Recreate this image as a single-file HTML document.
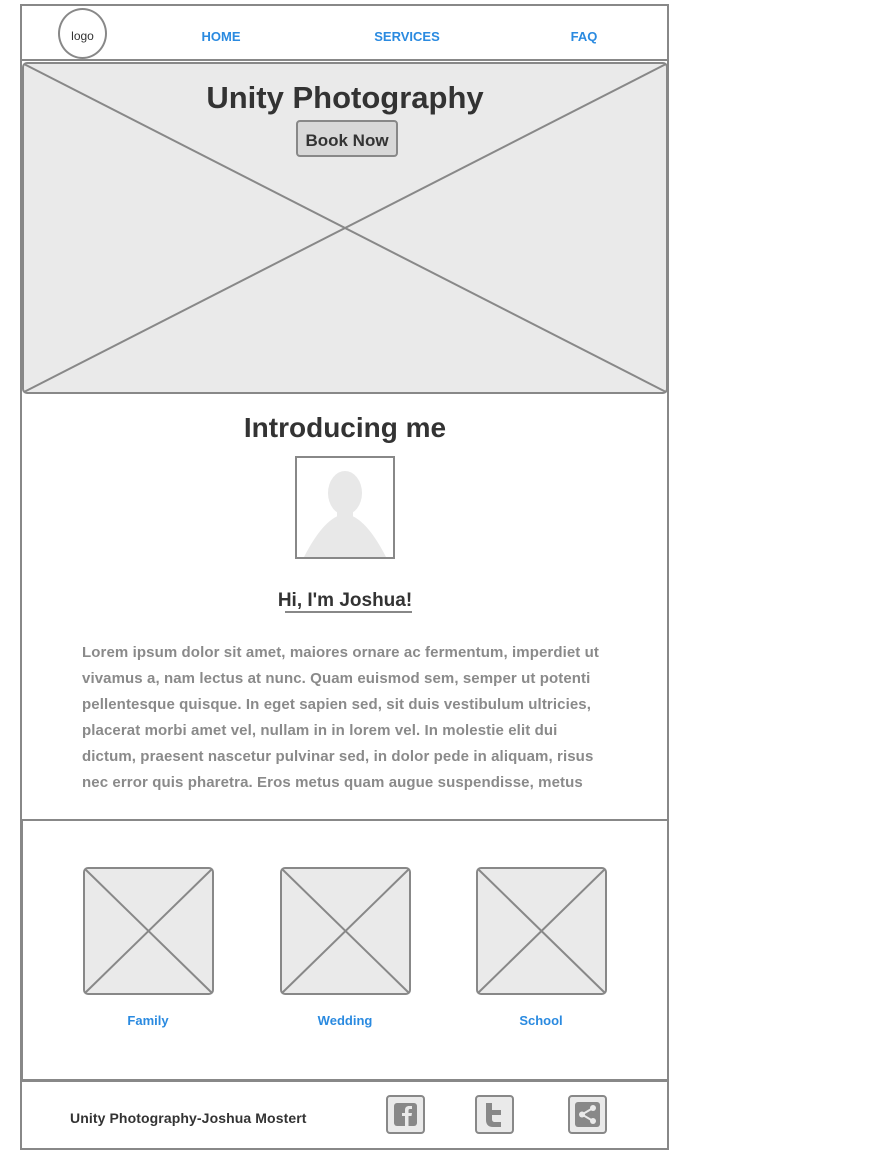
<!DOCTYPE html>
<html><head><meta charset="utf-8"><style>
*{margin:0;padding:0;box-sizing:border-box}
body{width:894px;height:1170px;background:#fff;font-family:"Liberation Sans",sans-serif;position:relative;overflow:hidden}
.a{position:absolute}
.c{position:absolute;transform:translateX(-50%);white-space:nowrap}
.nav{color:#2a8ae0;font-size:13px;font-weight:bold;top:29px}
.lbl{color:#2a8ae0;font-size:13px;font-weight:bold;top:1013px}
.p{left:82px;font-size:15px;font-weight:bold;color:#8a8a8a;white-space:nowrap;letter-spacing:0.1px}
.ic{width:39px;height:39px;border:2px solid #888;border-radius:4px;background:#eaeaea;top:1095px}
</style></head><body>
<div class="a" style="left:20px;top:4px;width:649px;height:1146px;border:2px solid #888"></div>
<div class="a" style="left:20px;top:59px;width:649px;height:2px;background:#888"></div>
<div class="a" style="left:58px;top:8px;width:49px;height:51px;border:2px solid #888;border-radius:50%;font-size:12px;color:#333;text-align:center;line-height:53px">logo</div>
<div class="c nav" style="left:221px">HOME</div>
<div class="c nav" style="left:407px">SERVICES</div>
<div class="c nav" style="left:584px">FAQ</div>
<svg class="a" style="left:22px;top:62px" width="646" height="332"><rect x="1" y="1" width="644" height="330" rx="4" fill="#eaeaea" stroke="#888" stroke-width="2"/><line x1="2" y1="2" x2="644" y2="330" stroke="#888" stroke-width="2"/><line x1="644" y1="2" x2="2" y2="330" stroke="#888" stroke-width="2"/></svg>
<div class="c" style="left:345px;top:80px;font-size:31px;font-weight:bold;color:#333">Unity Photography</div>
<div class="a" style="left:296px;top:120px;width:102px;height:37px;background:#d8d8d8;border:2px solid #888;border-radius:4px;font-size:17px;font-weight:bold;color:#333;text-align:center;line-height:38px">Book Now</div>
<div class="c" style="left:345px;top:412px;font-size:28px;font-weight:bold;color:#333">Introducing me</div>
<svg class="a" style="left:295px;top:456px" width="100" height="103"><rect x="1" y="1" width="98" height="101" fill="#fff" stroke="#888" stroke-width="2"/><ellipse cx="50" cy="37" rx="17" ry="22" fill="#e8e8e8"/><rect x="42" y="50" width="16" height="20" fill="#e8e8e8"/><path d="M9 101 Q30 60 50 58 Q70 60 91 101 Z" fill="#e8e8e8"/></svg>
<div class="c" style="left:345px;top:590px;font-size:19px;font-weight:bold;color:#333">Hi, I'm Joshua!</div>
<div class="a" style="left:285px;top:611px;width:127px;height:2px;background:#888"></div>
<div class="a p" style="top:644px">Lorem ipsum dolor sit amet, maiores ornare ac fermentum, imperdiet ut</div>
<div class="a p" style="top:670px">vivamus a, nam lectus at nunc. Quam euismod sem, semper ut potenti</div>
<div class="a p" style="top:696px">pellentesque quisque. In eget sapien sed, sit duis vestibulum ultricies,</div>
<div class="a p" style="top:722px">placerat morbi amet vel, nullam in in lorem vel. In molestie elit dui</div>
<div class="a p" style="top:748px">dictum, praesent nascetur pulvinar sed, in dolor pede in aliquam, risus</div>
<div class="a p" style="top:774px">nec error quis pharetra. Eros metus quam augue suspendisse, metus</div>
<div class="a" style="left:20px;top:819px;width:649px;height:2px;background:#888"></div>
<div class="a" style="left:20px;top:821px;width:3px;height:260px;background:#888"></div>
<svg class="a" style="left:83px;top:867px" width="131" height="128"><rect x="1" y="1" width="129" height="126" rx="4" fill="#eaeaea" stroke="#888" stroke-width="2"/><line x1="2" y1="2" x2="129" y2="126" stroke="#888" stroke-width="2"/><line x1="129" y1="2" x2="2" y2="126" stroke="#888" stroke-width="2"/></svg>
<svg class="a" style="left:280px;top:867px" width="131" height="128"><rect x="1" y="1" width="129" height="126" rx="4" fill="#eaeaea" stroke="#888" stroke-width="2"/><line x1="2" y1="2" x2="129" y2="126" stroke="#888" stroke-width="2"/><line x1="129" y1="2" x2="2" y2="126" stroke="#888" stroke-width="2"/></svg>
<svg class="a" style="left:476px;top:867px" width="131" height="128"><rect x="1" y="1" width="129" height="126" rx="4" fill="#eaeaea" stroke="#888" stroke-width="2"/><line x1="2" y1="2" x2="129" y2="126" stroke="#888" stroke-width="2"/><line x1="129" y1="2" x2="2" y2="126" stroke="#888" stroke-width="2"/></svg>
<div class="c lbl" style="left:148px">Family</div>
<div class="c lbl" style="left:345px">Wedding</div>
<div class="c lbl" style="left:541px">School</div>
<div class="a" style="left:20px;top:1079px;width:649px;height:3px;background:#888"></div>
<div class="a" style="left:70px;top:1110px;font-size:14px;font-weight:bold;color:#333;white-space:nowrap;letter-spacing:0.1px">Unity Photography-Joshua Mostert</div>
<div class="a ic" style="left:386px"><svg width="35" height="35"><rect x="6" y="6" width="23" height="23" rx="3" fill="#888"/><path d="M17 29V19h-3v-3h3v-3c0-3 2-4 4-4h3v3h-2c-1 0-1.5.5-1.5 1.5V16h3.5l-.5 3h-3v10z" fill="#eaeaea"/></svg></div>
<div class="a ic" style="left:475px"><svg width="35" height="35"><path d="M9 6h6v7h9v5h-9v4c0 2 1 3 3 3h6v5h-8c-5 0-7-3-7-7z" fill="#888"/></svg></div>
<div class="a ic" style="left:568px"><svg width="35" height="35"><rect x="5" y="5" width="25" height="25" rx="3" fill="#888"/><circle cx="23" cy="11" r="3" fill="#eaeaea"/><circle cx="23" cy="24" r="3" fill="#eaeaea"/><circle cx="12" cy="17.5" r="3" fill="#eaeaea"/><path d="M23 11L12 17.5L23 24" stroke="#eaeaea" stroke-width="2" fill="none"/></svg></div>
</body></html>
